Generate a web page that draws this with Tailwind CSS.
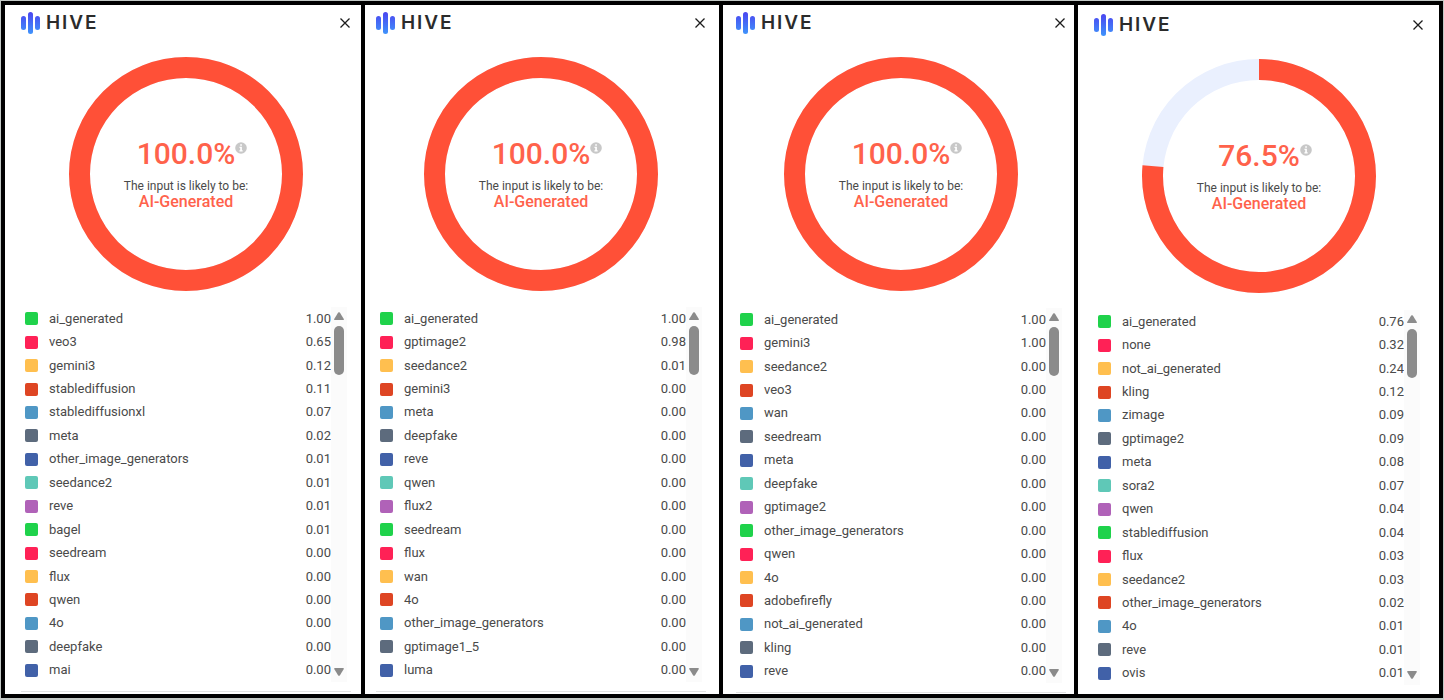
<!DOCTYPE html>
<html lang="en">
  <head>
    <meta charset="UTF-8" />
    <meta name="viewport" content="width=device-width, initial-scale=1.0" />
    <script src="https://cdn.jsdelivr.net/npm/@tailwindcss/browser@4"></script>
    <title>Hive detection results</title>
  </head>
  <body class="bg-[#c3c9c6] font-['Roboto',sans-serif] text-[#4a4a4a]">
    <!-- shared logo gradient -->
    <svg class="absolute size-0" aria-hidden="true">
      <defs>
        <linearGradient id="hive-gradient" gradientUnits="userSpaceOnUse" x1="0" y1="0" x2="0" y2="22">
          <stop offset="0" stop-color="#4b45f0" />
          <stop offset="1" stop-color="#3f94fb" />
        </linearGradient>
      </defs>
    </svg>

    <main id="panels" class="m-px mb-0.5 grid grid-cols-[356fr_354fr_351fr_361fr] gap-1 bg-black p-1"></main>

    <script>
      const colors = ["#1fd24b", "#ff2156", "#ffbf4f", "#de4523", "#4f97c5", "#5d6b7d", "#4161a8", "#5fc8b7", "#b062b8"]

      const results = [
        {
          percent: 100,
          panelClass: "pt-[7px] pl-4 pr-2.5",
          tableClass: "mt-4",
          line: true,
          scores: [
            ["ai_generated", "1.00"], ["veo3", "0.65"], ["gemini3", "0.12"], ["stablediffusion", "0.11"],
            ["stablediffusionxl", "0.07"], ["meta", "0.02"], ["other_image_generators", "0.01"], ["seedance2", "0.01"],
            ["reve", "0.01"], ["bagel", "0.01"], ["seedream", "0.00"], ["flux", "0.00"],
            ["qwen", "0.00"], ["4o", "0.00"], ["deepfake", "0.00"], ["mai", "0.00"],
          ],
        },
        {
          percent: 100,
          panelClass: "pt-[7px] pl-[11px] pr-[13px]",
          tableClass: "mt-4",
          line: true,
          scores: [
            ["ai_generated", "1.00"], ["gptimage2", "0.98"], ["seedance2", "0.01"], ["gemini3", "0.00"],
            ["meta", "0.00"], ["deepfake", "0.00"], ["reve", "0.00"], ["qwen", "0.00"],
            ["flux2", "0.00"], ["seedream", "0.00"], ["flux", "0.00"], ["wan", "0.00"],
            ["4o", "0.00"], ["other_image_generators", "0.00"], ["gptimage1_5", "0.00"], ["luma", "0.00"],
          ],
        },
        {
          percent: 100,
          panelClass: "pt-[7px] pl-[13px] pr-2",
          tableClass: "mt-[17px]",
          line: true,
          scores: [
            ["ai_generated", "1.00"], ["gemini3", "1.00"], ["seedance2", "0.00"], ["veo3", "0.00"],
            ["wan", "0.00"], ["seedream", "0.00"], ["meta", "0.00"], ["deepfake", "0.00"],
            ["gptimage2", "0.00"], ["other_image_generators", "0.00"], ["qwen", "0.00"], ["4o", "0.00"],
            ["adobefirefly", "0.00"], ["not_ai_generated", "0.00"], ["kling", "0.00"], ["reve", "0.00"],
          ],
        },
        {
          percent: 76.5,
          panelClass: "pt-[9px] pl-4 pr-[15px]",
          tableClass: "mt-[17px]",
          line: false,
          scores: [
            ["ai_generated", "0.76"], ["none", "0.32"], ["not_ai_generated", "0.24"], ["kling", "0.12"],
            ["zimage", "0.09"], ["gptimage2", "0.09"], ["meta", "0.08"], ["sora2", "0.07"],
            ["qwen", "0.04"], ["stablediffusion", "0.04"], ["flux", "0.03"], ["seedance2", "0.03"],
            ["other_image_generators", "0.02"], ["4o", "0.01"], ["reve", "0.01"], ["ovis", "0.01"],
          ],
        },
      ]

      const panels = document.querySelector("#panels")

      results.forEach((result) => {
        const rows = result.scores.map(([name, score], i) => `
          <tr>
            <th scope="row" class="p-0 pl-1 text-left font-normal">
              <div class="flex items-center gap-[11px]">
                <span class="size-[13px] rounded-xs" style="background-color: ${colors[i % colors.length]}"></span>
                <span>${name}</span>
              </div>
            </th>
            <td class="p-0 text-right">${score}</td>
          </tr>
        `).join("")

        panels.insertAdjacentHTML(
          "beforeend",
          `
          <section class="min-w-0 overflow-hidden bg-white pb-px ${result.panelClass}">
            <header class="flex h-[22px] items-center justify-between">
              <div class="flex items-center gap-1.5">
                <svg class="h-[22px] w-[19px]" viewBox="0 0 19 22" fill="url(#hive-gradient)" aria-hidden="true">
                  <rect x="0" y="4" width="5" height="14" rx="2.5" />
                  <rect x="7" y="0" width="5" height="22" rx="2.5" />
                  <rect x="14" y="4" width="5" height="14" rx="2.5" />
                </svg>
                <span class="font-['Inter',sans-serif] text-[19px] leading-[22px] font-semibold tracking-widest text-[#2b2b2b]">HIVE</span>
              </div>
              <button type="button" aria-label="Close" class="mr-px text-[#1c1c1c]">
                <svg class="size-2.5" viewBox="0 0 10 10" fill="none" stroke="currentColor" stroke-width="1.3" aria-hidden="true">
                  <path d="M0.5 0.5 9.5 9.5M9.5 0.5 0.5 9.5" />
                </svg>
              </button>
            </header>

            <div class="mx-auto mt-[23px] grid w-[234px] place-items-center">
              <svg class="col-start-1 row-start-1 w-full -rotate-90" viewBox="0 0 234 234" fill="none" stroke-width="21" aria-hidden="true">
                <circle cx="117" cy="117" r="106.5" stroke="#eaf0fe" />
                <circle cx="117" cy="117" r="106.5" stroke="#ff5037" pathLength="100" stroke-dasharray="${result.percent} 100" />
              </svg>
              <div class="col-start-1 row-start-1 pb-1 text-center">
                <div class="relative mx-auto w-fit text-[30px] leading-[40px] font-medium text-[#ff624b]">
                  ${result.percent.toFixed(1)}%
                  <svg class="absolute top-2 left-full size-3" viewBox="0 0 12 12" aria-hidden="true">
                    <circle cx="6" cy="6" r="5.8" fill="#c8c8c8" />
                    <path d="M5.2 2.2h1.7v1.5H5.2zM4.5 4.8h2.4v3.5h.8v1.2H4.4V8.3h.8V6h-.7z" fill="#fff" />
                  </svg>
                </div>
                <p class="mt-1 text-[12px] leading-4">The input is likely to be:</p>
                <p class="text-[16px] leading-4 font-medium text-[#ff624b]">AI-Generated</p>
              </div>
            </div>

            <div class="flex pr-1 ${result.tableClass}">
              <table class="h-[375px] flex-1 text-[13px] leading-4">
                <tbody>${rows}</tbody>
              </table>
              <div class="flex w-4 flex-col items-center bg-[#fbfbfb] pt-[5px] pb-1 text-[#8b8b8b]" aria-hidden="true">
                <svg class="h-2 w-2.5" viewBox="0 0 10 8" fill="currentColor"><path d="M4.2.6q.8-.9 1.6 0L9.8 7q.3 1-.8 1H1Q-.1 8 .2 7z" /></svg>
                <div class="mt-1.5 h-[49px] w-2.5 rounded-full bg-[#8b8b8b]"></div>
                <svg class="mt-auto mb-0.5 h-2 w-2.5" viewBox="0 0 10 8" fill="currentColor"><path d="M4.2 7.4q.8.9 1.6 0L9.8 1q.3-1-.8-1H1Q-.1 0 .2 1z" /></svg>
              </div>
            </div>
            ${result.line ? `<hr class="mt-[9px] border-[#e2e2e2]" />` : ""}
          </section>
          `
        )
      })
    </script>
  </body>
</html>
